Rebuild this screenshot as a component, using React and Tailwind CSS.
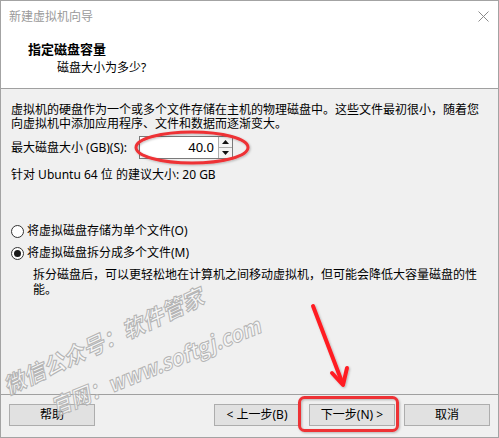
import React from "react";

const Btn = ({ children }) => (
  <button className="w-[86px] h-[22px] bg-[#e1e1e1] border border-[#adadad] text-[12px] leading-[20px] text-black">
    {children}
  </button>
);

const Radio = ({ checked, label }) => (
  <div className="flex items-center h-[14px]">
    <span className="w-[13px] h-[13px] rounded-full border border-[#333333] bg-white flex items-center justify-center">
      {checked && <span className="w-[7px] h-[7px] rounded-full bg-[#1a1a1a]" />}
    </span>
    <span className="ml-[3px] leading-[14px] whitespace-nowrap">{label}</span>
  </div>
);

const Overlay = () => (
  <svg
    className="absolute -left-px -top-px pointer-events-none"
    width="499"
    height="438"
    viewBox="0 0 499 438"
  >
    <defs>
      <filter id="sh" x="-20%" y="-20%" width="140%" height="140%">
        <feDropShadow dx="1" dy="1" stdDeviation="1" floodColor="#000" floodOpacity="0.25" />
      </filter>
    </defs>
    {/* watermark */}
    <g
      fontFamily="'Noto Sans CJK SC', 'Noto Sans', sans-serif"
      fontStyle="italic"
      fontWeight="700"
      fontSize="22"
      fill="rgba(255,255,255,0.55)"
      stroke="#b4b4b4"
      strokeWidth="1"
    >
      <text x="8" y="395" transform="rotate(-25 8 395)" textLength="218" lengthAdjust="spacingAndGlyphs">
        微信公众号：软件管家
      </text>
      <text x="55" y="416" transform="rotate(-22 55 416)" textLength="224" lengthAdjust="spacingAndGlyphs">
        官网：www.softgj.com
      </text>
    </g>
    {/* highlight marks */}
    <g fill="none" stroke="#ee3035" strokeWidth="3" filter="url(#sh)">
      <ellipse cx="192" cy="147.5" rx="56" ry="15.5" />
      <rect x="299.5" y="397.5" width="98" height="33" rx="5" />
    </g>
    <g fill="none" stroke="#ff1e24" strokeWidth="4" strokeLinecap="round" strokeLinejoin="round" filter="url(#sh)">
      <line x1="313" y1="306" x2="342" y2="382" />
      <polyline points="332,373 343,385 347,368" />
    </g>
  </svg>
);

export default function App() {
  return (
    <div className="relative w-[499px] h-[438px] border border-[#a3a3a3] bg-[#f0f0f0] flex flex-col text-[12px] text-black overflow-hidden font-['Noto_Sans','Noto_Sans_CJK_SC',sans-serif]">
      {/* Title + header */}
      <div className="bg-white border-b border-[#a0a0a0]">
        <div className="h-[31px] flex items-center justify-between pl-[8px] pr-[9px]">
          <span className="text-[#9a9a9a] leading-[14px]">新建虚拟机向导</span>
          <svg width="11" height="11" viewBox="0 0 11 11">
            <path d="M0.5 0.5 L10.5 10.5 M10.5 0.5 L0.5 10.5" stroke="#8a8a8a" strokeWidth="1" />
          </svg>
        </div>
        <div className="h-[56px] pt-[10px]">
          <div className="pl-[27px] text-[13px] font-bold leading-[14px]">指定磁盘容量</div>
          <div className="pl-[56px] mt-[5px] leading-[14px]">磁盘大小为多少?</div>
        </div>
      </div>

      {/* Body */}
      <div className="flex-1 px-[10px] pt-[14px]">
        <p className="leading-[14px] whitespace-nowrap">
          虚拟机的硬盘作为一个或多个文件存储在主机的物理磁盘中。这些文件最初很小，随着您
          <br />
          向虚拟机中添加应用程序、文件和数据而逐渐变大。
        </p>

        <div className="mt-[5px] h-[23px] flex items-center">
          <span className="w-[128px] whitespace-nowrap leading-[14px]">最大磁盘大小 (GB)(S):</span>
          <div className="flex h-[23px] w-[94px] border border-[#7a7a7a] bg-white">
            <div className="flex-1 flex items-center justify-end pr-[4px] text-[13px]">40.0</div>
            <div className="w-[14px] border-l border-[#adadad] flex flex-col bg-[#f4f4f4]">
              <div className="flex-1 flex items-center justify-center border-b border-[#adadad]">
                <svg width="7" height="4" viewBox="0 0 7 4">
                  <path d="M0 4 L3.5 0 L7 4 Z" fill="#111" />
                </svg>
              </div>
              <div className="flex-1 flex items-center justify-center">
                <svg width="7" height="4" viewBox="0 0 7 4">
                  <path d="M0 0 L7 0 L3.5 4 Z" fill="#111" />
                </svg>
              </div>
            </div>
          </div>
        </div>

        <p className="mt-[9px] leading-[14px] whitespace-nowrap">针对 Ubuntu 64 位 的建议大小: 20 GB</p>

        <div className="mt-[42px]">
          <Radio label="将虚拟磁盘存储为单个文件(O)" />
          <div className="mt-[8px]">
            <Radio checked label="将虚拟磁盘拆分成多个文件(M)" />
          </div>
          <p className="mt-[7px] pl-[22px] leading-[15px] whitespace-nowrap">
            拆分磁盘后，可以更轻松地在计算机之间移动虚拟机，但可能会降低大容量磁盘的性
            <br />
            能。
          </p>
        </div>
      </div>

      {/* Footer */}
      <div className="h-[43px] border-t border-[#a0a0a0] pt-[9px] pl-[8px] pr-[8px] flex justify-between">
        <Btn>帮助</Btn>
        <div className="flex gap-[9px]">
          <Btn>&lt; 上一步(B)</Btn>
          <Btn>下一步(N) &gt;</Btn>
          <Btn>取消</Btn>
        </div>
      </div>

      <Overlay />
    </div>
  );
}
